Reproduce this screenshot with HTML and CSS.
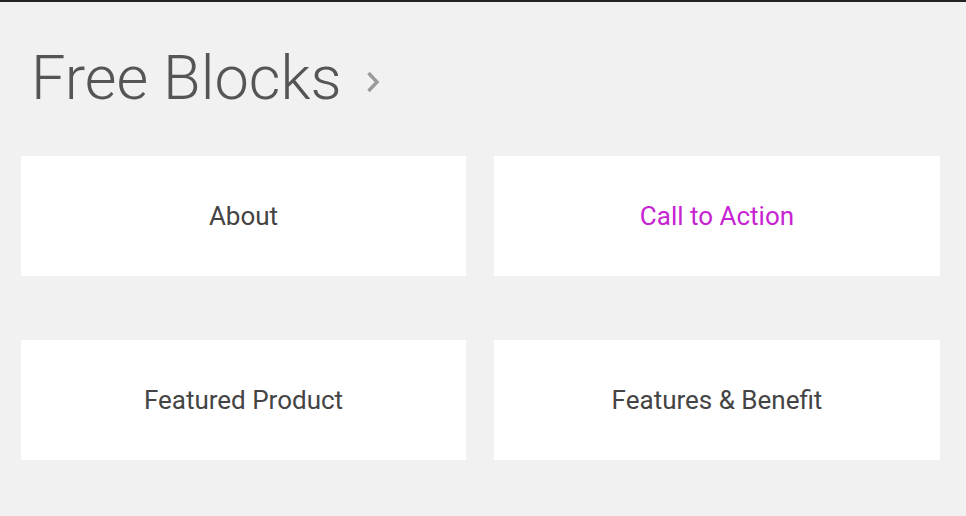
FILE: index.html
```html
<!DOCTYPE html>
<html>
<head>
<meta charset="utf-8">
<link rel="stylesheet" href="styles.css">
</head>
<body>
<div class="page">
  <h1 class="title">Free Blocks<svg class="chev" width="14" height="22" viewBox="0 0 14 22"><polyline points="2.5,2 11,11 2.5,20" fill="none" stroke="#9a9a9a" stroke-width="3.4"/></svg></h1>
  <div class="grid">
    <div class="card">About</div>
    <div class="card active">Call to Action</div>
    <div class="card">Featured Product</div>
    <div class="card">Features &amp; Benefit</div>
  </div>
</div>
</body>
</html>
```
FILE: styles.css
```css
html, body {
  margin: 0;
  padding: 0;
  background: #f1f1f1;
}
body {
  border-top: 2px solid #232323;
  font-family: Roboto, "Liberation Sans", sans-serif;
  height: 514px;
  overflow: hidden;
}
.page {
  padding: 44px 26px 0 21px;
}
.title {
  margin: 0 0 46px 10px;
  font-size: 61.3px;
  line-height: 64px;
  font-weight: 300;
  color: #555555;
  display: flex;
  align-items: center;
}
.chev {
  margin-left: 24px;
  margin-top: 8px;
}
.grid {
  display: grid;
  grid-template-columns: 445px 446px;
  column-gap: 28px;
  row-gap: 64px;
}
.card {
  background: #ffffff;
  height: 120px;
  display: flex;
  align-items: center;
  justify-content: center;
  font-size: 26px;
  color: #444444;
}
.card.active {
  color: #c624d2;
}
```
